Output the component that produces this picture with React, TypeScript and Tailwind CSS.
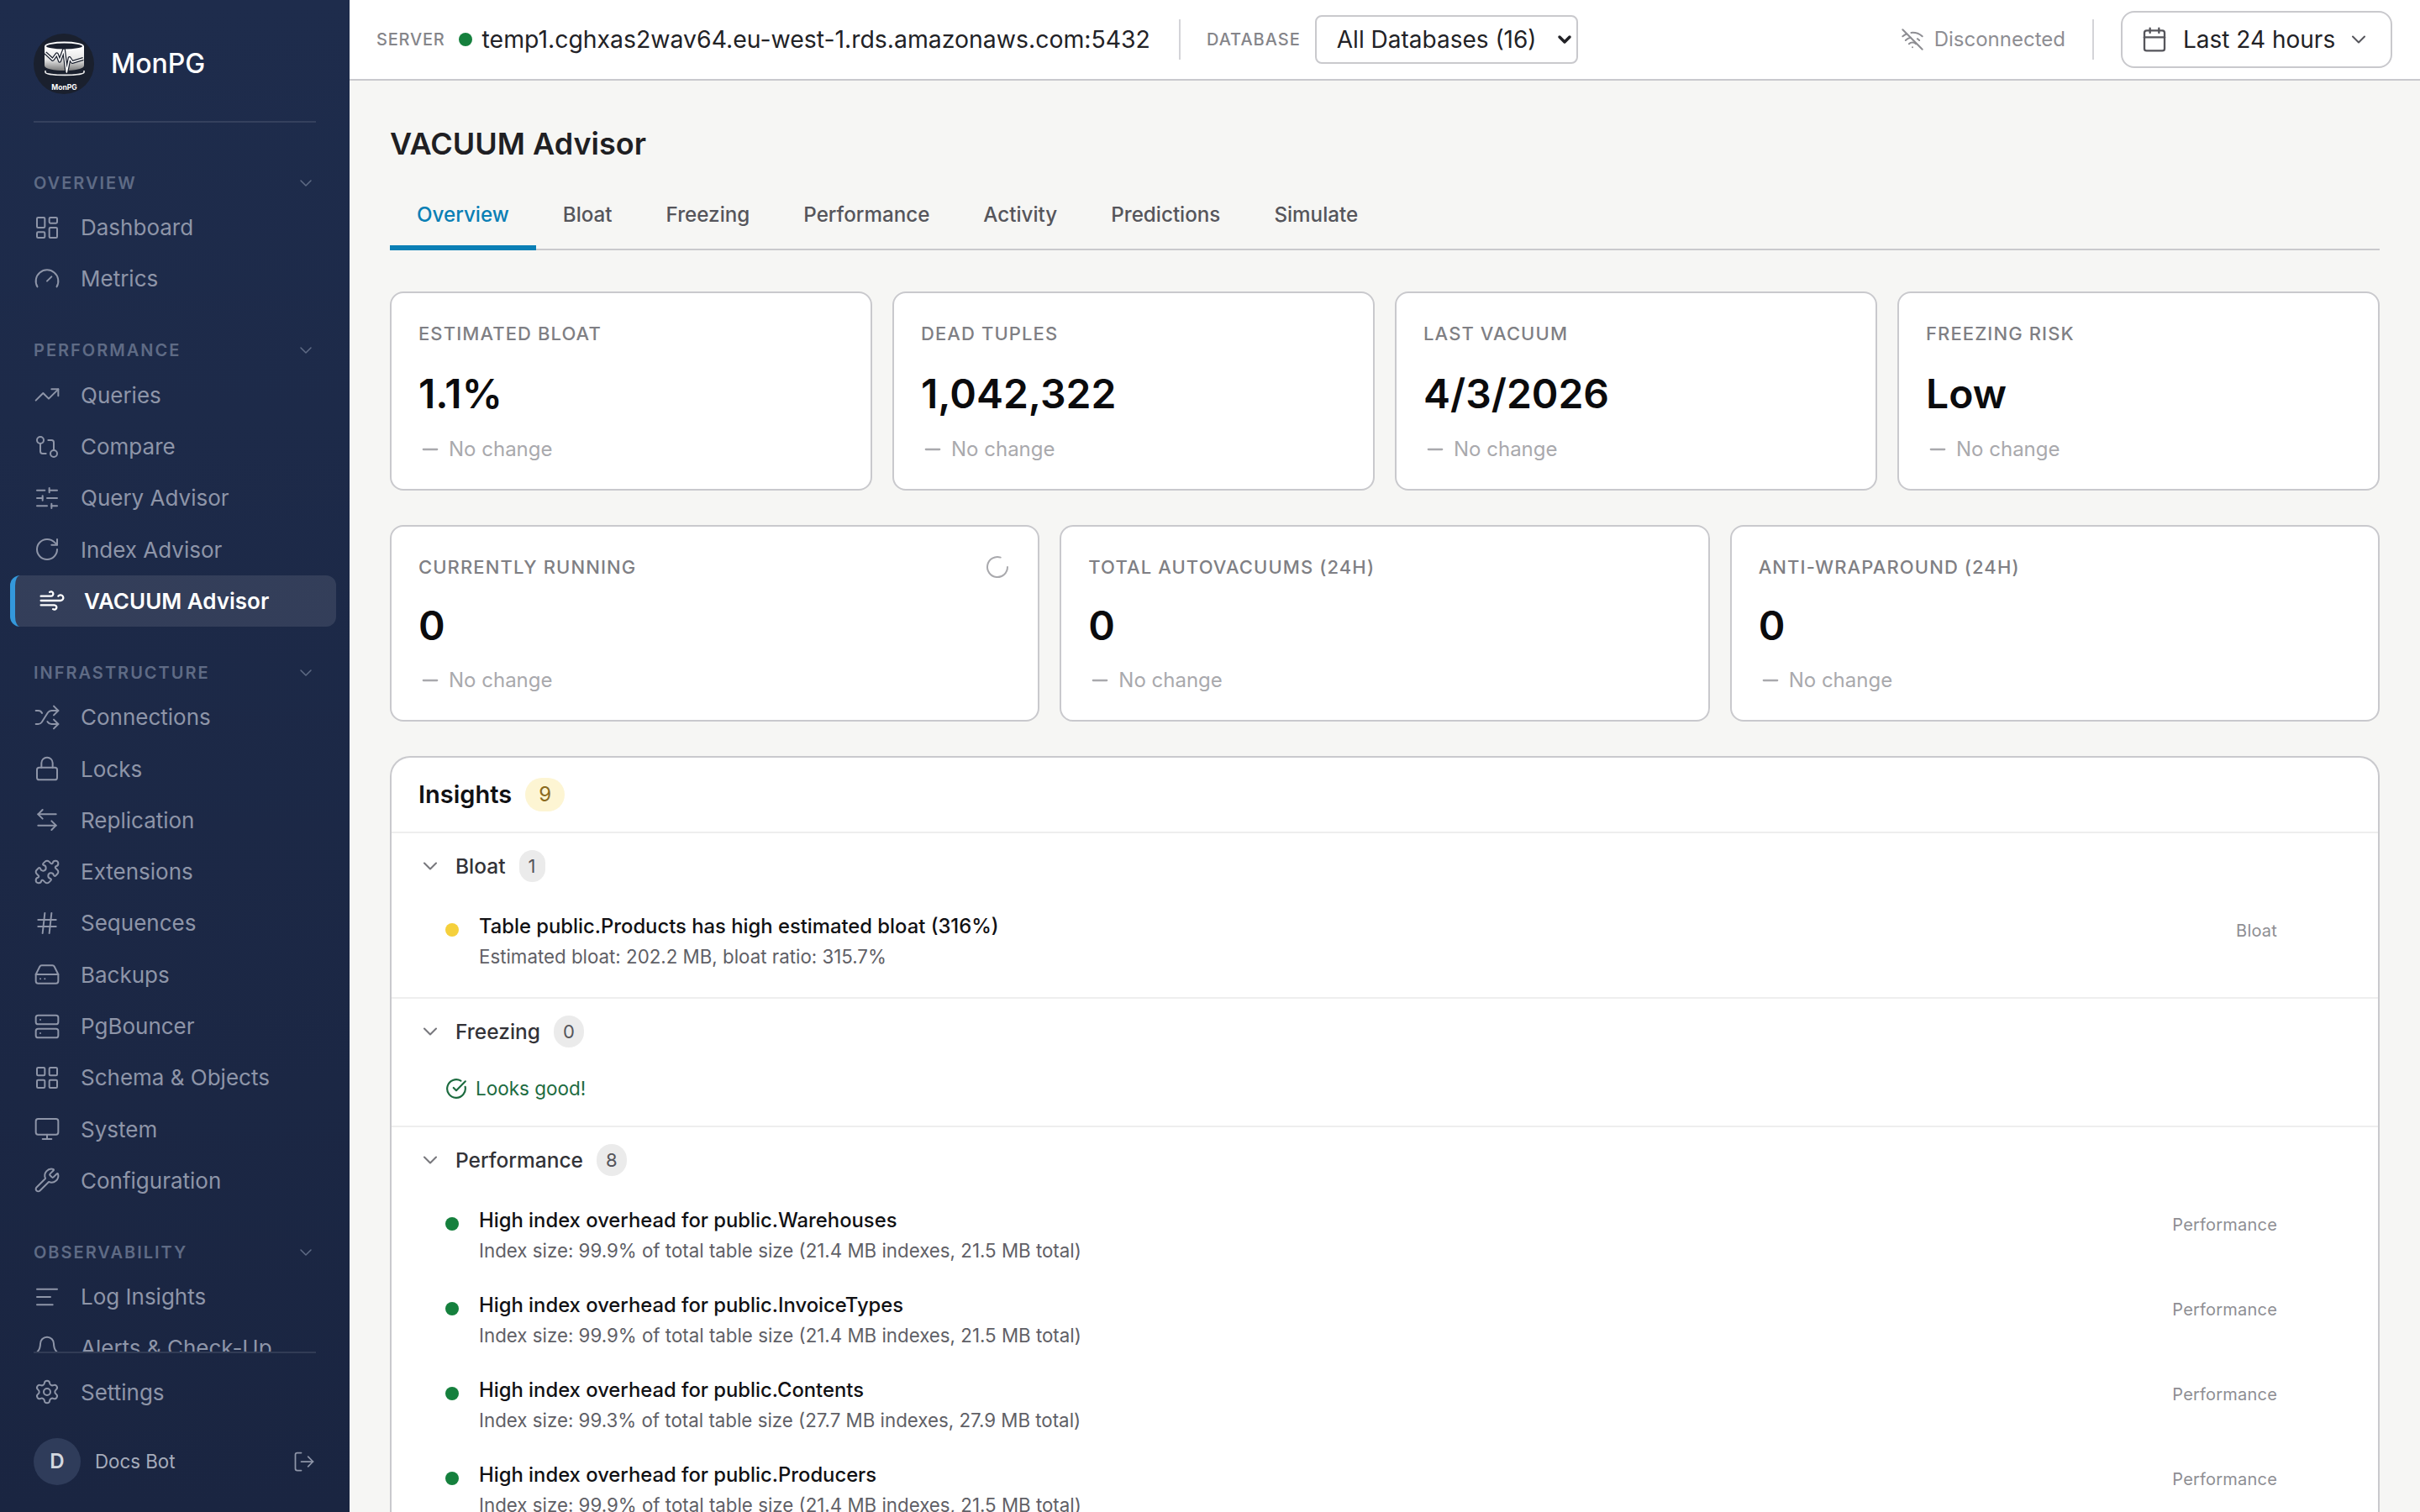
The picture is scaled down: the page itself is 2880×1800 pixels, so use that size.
import React from "react";
import {
  LayoutDashboard, Gauge, TrendingUp, GitCompare, SlidersHorizontal, RotateCw, Wind, Shuffle, Lock,
  ArrowLeftRight, Puzzle, Hash, HardDrive, Server, LayoutGrid, Monitor, Wrench, AlignLeft, Bell,
  Settings, LogOut, ChevronDown, WifiOff, Calendar, LoaderCircle, CircleCheckBig, Minus,
} from "lucide-react";

type Item = { label: string; icon: React.ComponentType<any>; active?: boolean };

const sections: { title: string; items: Item[] }[] = [
  { title: "Overview", items: [{ label: "Dashboard", icon: LayoutDashboard }, { label: "Metrics", icon: Gauge }] },
  {
    title: "Performance",
    items: [
      { label: "Queries", icon: TrendingUp },
      { label: "Compare", icon: GitCompare },
      { label: "Query Advisor", icon: SlidersHorizontal },
      { label: "Index Advisor", icon: RotateCw },
      { label: "VACUUM Advisor", icon: Wind, active: true },
    ],
  },
  {
    title: "Infrastructure",
    items: [
      { label: "Connections", icon: Shuffle },
      { label: "Locks", icon: Lock },
      { label: "Replication", icon: ArrowLeftRight },
      { label: "Extensions", icon: Puzzle },
      { label: "Sequences", icon: Hash },
      { label: "Backups", icon: HardDrive },
      { label: "PgBouncer", icon: Server },
      { label: "Schema & Objects", icon: LayoutGrid },
      { label: "System", icon: Monitor },
      { label: "Configuration", icon: Wrench },
    ],
  },
  {
    title: "Observability",
    items: [{ label: "Log Insights", icon: AlignLeft }, { label: "Alerts & Check-Up", icon: Bell }],
  },
];

function Logo() {
  const ecg = "M14 23 L22.7 31 L27.7 24.3 L31 32.7 L36 19.3 L39.3 46 L42.7 29 L46 34 L59 30";
  return (
    <svg width="72" height="72" viewBox="0 0 72 72" className="shrink-0">
      <defs>
        <linearGradient id="cyl" x1="0" x2="0" y1="0" y2="1">
          <stop offset="0" stopColor="#ffffff" />
          <stop offset="0.55" stopColor="#e6e6e6" />
          <stop offset="1" stopColor="#7c7c7c" />
        </linearGradient>
      </defs>
      <circle cx="36" cy="36" r="36" fill="#1a202e" />
      <path d="M13 15 V38 C13 46 60 46 60 38 V15 Z" fill="url(#cyl)" />
      <ellipse cx="36.5" cy="15" rx="22.5" ry="4.5" fill="#1a202e" stroke="#ffffff" strokeWidth="1.8" />
      <path d={ecg} fill="none" stroke="#1a202e" strokeWidth="4" strokeLinejoin="round" />
      <path d={ecg} fill="none" stroke="#ffffff" strokeWidth="1.6" strokeLinejoin="round" />
      <path d="M14 44 V46 C14 50.5 60 50.5 60 46 V44" fill="none" stroke="#ececec" strokeWidth="1.6" />
      <text x="36.5" y="67" textAnchor="middle" fontSize="8.5" fontWeight="700" fill="#ffffff" fontFamily="Inter, sans-serif">MonPG</text>
    </svg>
  );
}

function NavItem({ item }: { item: Item }) {
  const Icon = item.icon;
  if (item.active) {
    return (
      <div className="ml-3 mr-4 flex h-[61.3px] items-center gap-[22px] rounded-xl border-l-[6px] border-[#3498db] bg-white/10 pl-7 text-[26px] font-semibold text-white">
        <Icon size={32} strokeWidth={1.75} className="shrink-0" />
        <span>{item.label}</span>
      </div>
    );
  }
  return (
    <div className="flex h-[61.3px] items-center gap-6 pl-10 text-[26px] text-[#8e95a8]">
      <Icon size={32} strokeWidth={1.5} className="shrink-0" />
      <span className="whitespace-nowrap">{item.label}</span>
    </div>
  );
}

function Sidebar() {
  return (
    <aside className="flex h-[1800px] w-[416px] shrink-0 flex-col bg-gradient-to-b from-[#1e2c4c] to-[#1a2541]">
      <div className="mx-10 flex h-[146px] shrink-0 items-start border-b-2 border-white/10 pt-10">
        <div className="flex items-center gap-5">
          <Logo />
          <span className="text-[32px] font-medium text-white">MonPG</span>
        </div>
      </div>
      <nav className="flex min-h-0 flex-1 flex-col gap-8 overflow-hidden pt-[49px]">
        {sections.map((s) => (
          <div key={s.title} className="shrink-0">
            <div className="flex h-[45px] items-center justify-between pl-10 pr-10">
              <span className="text-[20px] font-semibold uppercase tracking-[0.1em] text-[#5f6b85]">{s.title}</span>
              <ChevronDown size={24} strokeWidth={1.5} className="text-[#5f6b85]" />
            </div>
            {s.items.map((i) => (
              <NavItem key={i.label} item={i} />
            ))}
          </div>
        ))}
      </nav>
      <div className="mx-10 h-0.5 shrink-0 bg-white/10" />
      <div className="shrink-0 pt-4">
        <NavItem item={{ label: "Settings", icon: Settings }} />
      </div>
      <div className="mt-6 mb-8 flex h-14 shrink-0 items-center pl-10 pr-10">
        <div className="flex h-14 w-14 items-center justify-center rounded-full bg-[#2f3c5a] text-[24px] font-semibold text-[#d3d7df]">D</div>
        <span className="ml-[17px] flex-1 text-[22.3px] text-[#a6acbb]">Docs Bot</span>
        <LogOut size={28} strokeWidth={1.5} className="text-[#8e95a8]" />
      </div>
    </aside>
  );
}

function Header() {
  return (
    <header className="flex h-24 shrink-0 items-center border-b-2 border-[#c9c9cd] bg-white pl-8 pr-[33px]">
      <span className="text-[20px] font-medium uppercase tracking-[0.04em] text-[#85858a]">Server</span>
      <span className="ml-4 h-4 w-4 rounded-full bg-[#15803d]" />
      <span className="ml-3 whitespace-nowrap text-[28.4px] text-[#222226]">temp1.cghxas2wav64.eu-west-1.rds.amazonaws.com:5432</span>
      <span className="ml-[34px] h-12 w-0.5 bg-[#d4d4d8]" />
      <span className="ml-[31px] text-[20px] font-medium uppercase tracking-[0.05em] text-[#85858a]">Database</span>
      <div className="relative ml-[17px]">
        <select className="h-[58px] w-[313px] appearance-none rounded-lg border-2 border-[#c9c9cd] bg-white pl-[24px] text-[28px] text-[#222226] outline-none">
          <option>All Databases (16)</option>
        </select>
        <ChevronDown size={24} strokeWidth={3.5} className="pointer-events-none absolute right-[4px] top-[17px] text-[#222226]" />
      </div>
      <div className="flex-1" />
      <WifiOff size={28} strokeWidth={1.75} className="text-[#8e8e93]" />
      <span className="ml-3 text-[24px] text-[#8e8e93]">Disconnected</span>
      <span className="ml-[32px] h-12 w-0.5 bg-[#d4d4d8]" />
      <div className="ml-[32px] flex h-[68px] w-[323px] items-center rounded-2xl border-2 border-[#c9c9cd] bg-white pl-[22px]">
        <Calendar size={32} strokeWidth={1.75} className="text-[#55555b]" />
        <span className="ml-[18px] text-[28px] text-[#222226]">Last 24 hours</span>
        <ChevronDown size={28} strokeWidth={1.75} className="ml-[14px] text-[#55555b]" />
      </div>
    </header>
  );
}

const tabs = ["Overview", "Bloat", "Freezing", "Performance", "Activity", "Predictions", "Simulate"];

function Tabs() {
  return (
    <div className="mt-[23px] flex h-[82px] items-stretch border-b-2 border-[#c9c9cd]">
      {tabs.map((t, i) => (
        <div
          key={t}
          className={
            i === 0
              ? "-mb-0.5 flex items-center border-b-[6px] border-[#0a7fb5] px-8 pt-1 text-[24.2px] font-medium text-[#0a7fb5]"
              : "flex items-center px-8 text-[24.2px] font-medium text-[#55555b]"
          }
        >
          {t}
        </div>
      ))}
    </div>
  );
}

function Stat({ label, value, spin, tall }: { label: string; value: string; spin?: boolean; tall?: boolean }) {
  return (
    <div className={(tall ? "h-[237px] " : "h-[234px] ") + "flex flex-col rounded-2xl border-2 border-[#c9c9cd] bg-white px-8 pt-[30px]"}>
      <div className="flex h-9 items-center justify-between">
        <span className="text-[22px] font-medium uppercase tracking-[0.05em] text-[#7f7f84]">{label}</span>
        {spin && <LoaderCircle size={32} strokeWidth={1.5} className="text-[#a9a9ad]" />}
      </div>
      <div className={(tall ? "mt-[21px] mb-[17px] " : "mt-[19px] mb-[16px] ") + "flex h-[66px] items-center text-[48px] font-semibold leading-none text-[#0b0b0d]"}>{value}</div>
      <div className="flex h-8 items-center text-[24px] text-[#a9a9ad]">
        <Minus size={28} strokeWidth={2} className="text-[#a9a9ad]" />
        <span className="ml-2">No change</span>
      </div>
    </div>
  );
}

function Count({ n }: { n: number }) {
  return (
    <span className="flex h-[38px] items-center justify-center rounded-full bg-[#ebebeb] px-[11px] text-[22px] text-[#55555b]">{n}</span>
  );
}

function GroupHeader({ title, n }: { title: string; n: number }) {
  return (
    <div className="flex h-[38px] items-center pl-8">
      <ChevronDown size={28} strokeWidth={1.75} className="text-[#77777c]" />
      <span className="ml-4 text-[24.5px] font-medium text-[#333338]">{title}</span>
      <span className="ml-4">
        <Count n={n} />
      </span>
    </div>
  );
}

function Insight({ title, sub, tag, dot }: { title: string; sub: string; tag: string; dot: string }) {
  return (
    <div className="flex items-start py-[14.5px] pl-16 pr-[120px]">
      <span className={"mt-[14px] h-4 w-4 shrink-0 rounded-full " + dot} />
      <div className="ml-6 flex-1">
        <div className="h-9 text-[23.8px] font-medium leading-9 text-[#111114]">{title}</div>
        <div className="h-9 text-[22.3px] leading-9 text-[#606066]">{sub}</div>
      </div>
      <span className="mt-2 text-[20px] leading-[30px] tracking-[0.01em] text-[#8e8e93]">{tag}</span>
    </div>
  );
}

function Insights() {
  const g = "bg-[#15803d]";
  const y = "bg-[#f5d03c]";
  return (
    <div className="mt-[41px] rounded-t-3xl border-2 border-b-0 border-[#c9c9cd] bg-white">
      <div className="flex h-[90px] items-center border-b-2 border-[#eeeeee] pl-8">
        <span className="text-[29px] font-semibold text-[#111114]">Insights</span>
        <span className="ml-4 flex h-10 w-[47px] items-center justify-center rounded-full bg-[#fdf5d3] text-[24px] text-[#8b6a1e]">9</span>
      </div>
      <div className="border-b-2 border-[#eeeeee] pb-4 pt-5">
        <GroupHeader title="Bloat" n={1} />
        <div className="pt-5">
          <Insight dot={y} tag="Bloat" title="Table public.Products has high estimated bloat (316%)" sub="Estimated bloat: 202.2 MB, bloat ratio: 315.7%" />
        </div>
      </div>
      <div className="border-b-2 border-[#eeeeee] pb-[26px] pt-5">
        <GroupHeader title="Freezing" n={0} />
        <div className="mt-[31px] flex h-9 items-center pl-16 text-[22.5px] text-[#1c6b3f]">
          <CircleCheckBig size={26} strokeWidth={2} />
          <span className="ml-[10px]">Looks good!</span>
        </div>
      </div>
      <div className="pt-5">
        <GroupHeader title="Performance" n={8} />
        <div className="pt-5">
          <Insight dot={g} tag="Performance" title="High index overhead for public.Warehouses" sub="Index size: 99.9% of total table size (21.4 MB indexes, 21.5 MB total)" />
          <Insight dot={g} tag="Performance" title="High index overhead for public.InvoiceTypes" sub="Index size: 99.9% of total table size (21.4 MB indexes, 21.5 MB total)" />
          <Insight dot={g} tag="Performance" title="High index overhead for public.Contents" sub="Index size: 99.3% of total table size (27.7 MB indexes, 27.9 MB total)" />
          <Insight dot={g} tag="Performance" title="High index overhead for public.Producers" sub="Index size: 99.9% of total table size (21.4 MB indexes, 21.5 MB total)" />
        </div>
      </div>
    </div>
  );
}

export default function App() {
  return (
    <div className="flex h-[1800px] w-[2880px] overflow-hidden bg-[#f6f6f4] font-[Inter,sans-serif]">
      <Sidebar />
      <div className="flex min-w-0 flex-1 flex-col">
        <Header />
        <main className="min-h-0 flex-1 overflow-hidden px-12 pt-[53px]">
          <h1 className="h-11 text-[36px] font-semibold leading-[44px] text-[#1f1f23]">VACUUM Advisor</h1>
          <Tabs />
          <div className="mt-[49px] grid grid-cols-4 gap-6">
            <Stat tall label="Estimated Bloat" value="1.1%" />
            <Stat tall label="Dead Tuples" value="1,042,322" />
            <Stat tall label="Last Vacuum" value="4/3/2026" />
            <Stat tall label="Freezing Risk" value="Low" />
          </div>
          <div className="mt-[41px] grid grid-cols-3 gap-6">
            <Stat label="Currently Running" value="0" spin />
            <Stat label="Total Autovacuums (24h)" value="0" />
            <Stat label="Anti-Wraparound (24h)" value="0" />
          </div>
          <Insights />
        </main>
      </div>
    </div>
  );
}
